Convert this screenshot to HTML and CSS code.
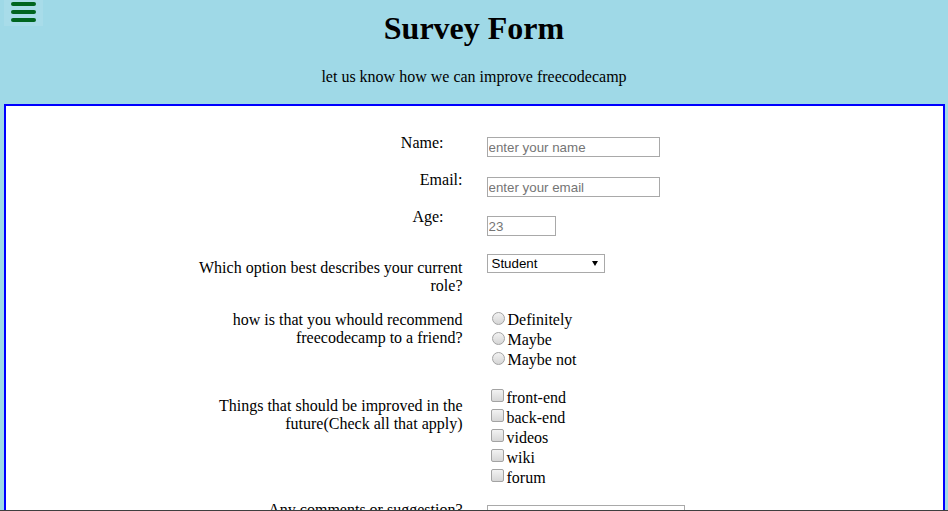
FILE: index.html
```html
<!DOCTYPE html>
<html lang="en">
<head>
<meta charset="utf-8">
<title>Survey Form</title>
<link rel="stylesheet" href="styles.css">
</head>
<body>
<header class="top">
  <button class="menu-btn" type="button" aria-label="menu">
    <svg width="25" height="20" viewBox="0 0 25 20">
      <rect x="0" y="0" width="25" height="4" rx="2" fill="#00651f"/>
      <rect x="0" y="8" width="25" height="4" rx="2" fill="#00651f"/>
      <rect x="0" y="16" width="25" height="4" rx="2" fill="#00651f"/>
    </svg>
  </button>
  <h1 class="title">Survey Form</h1>
  <p class="subtitle">let us know how we can improve freecodecamp</p>
</header>

<form class="survey">
  <div class="row r1">
    <label class="q q-indent" for="name">Name:</label>
    <div class="ctl"><input class="txt txt-long" id="name" type="text" placeholder="enter your name"></div>
  </div>
  <div class="row r2">
    <label class="q" for="email">Email:</label>
    <div class="ctl"><input class="txt txt-long" id="email" type="email" placeholder="enter your email"></div>
  </div>
  <div class="row r3">
    <label class="q q-indent" for="age">Age:</label>
    <div class="ctl"><input class="txt txt-short" id="age" type="number" placeholder="23"></div>
  </div>
  <div class="row r4">
    <label class="q" for="role">Which option best describes your current role?</label>
    <div class="ctl">
      <span class="select-wrap">
        <select id="role" class="sel">
          <option>Student</option>
          <option>Full Time Job</option>
          <option>Full Time Learner</option>
          <option>Other</option>
        </select>
      </span>
    </div>
  </div>
  <div class="row r5">
    <div class="q">how is that you whould recommend freecodecamp to a friend?</div>
    <div class="ctl">
      <div class="opt"><input class="radio" type="radio" name="rec" id="r-def"><label for="r-def">Definitely</label></div>
      <div class="opt"><input class="radio" type="radio" name="rec" id="r-may"><label for="r-may">Maybe</label></div>
      <div class="opt"><input class="radio" type="radio" name="rec" id="r-not"><label for="r-not">Maybe not</label></div>
    </div>
  </div>
  <div class="row r6">
    <div class="q">Things that should be improved in the future(Check all that apply)</div>
    <div class="ctl">
      <div class="opt"><input class="check" type="checkbox" id="c1"><label for="c1">front-end</label></div>
      <div class="opt"><input class="check" type="checkbox" id="c2"><label for="c2">back-end</label></div>
      <div class="opt"><input class="check" type="checkbox" id="c3"><label for="c3">videos</label></div>
      <div class="opt"><input class="check" type="checkbox" id="c4"><label for="c4">wiki</label></div>
      <div class="opt"><input class="check" type="checkbox" id="c5"><label for="c5">forum</label></div>
    </div>
  </div>
  <div class="row r7">
    <label class="q" for="comments">Any comments or suggestion?</label>
    <div class="ctl"><textarea id="comments" class="area"></textarea></div>
  </div>
</form>
</body>
</html>
```

FILE: styles.css
```css
html, body {
  margin: 0;
  padding: 0;
}

body {
  background: #9fd9e7;
  font-family: "Liberation Serif", "Times New Roman", serif;
  font-size: 16px;
  color: #000;
}

body::after {
  content: "";
  position: fixed;
  left: 0;
  right: 0;
  bottom: 0;
  height: 1px;
  background: #3f3f3f;
}

.top {
  text-align: center;
  padding: 10px 0 18px;
}

.menu-btn {
  position: absolute;
  top: 0;
  left: 4px;
  width: 39px;
  height: 26px;
  padding: 2px 7px 4px;
  margin: 0;
  border: 0;
  background: rgba(255, 255, 255, 0.1);
  display: block;
  line-height: 0;
}

.menu-btn svg {
  display: block;
}

.title {
  margin: 0;
  font-size: 32px;
  font-weight: bold;
  line-height: 37px;
}

.subtitle {
  margin: 21px 0 0;
  line-height: 18px;
}

.survey {
  margin: 0 3px 0 4px;
  border: 2px solid #0000ff;
  background: #fff;
  padding: 28px 0 60px;
}

.row {
  display: grid;
  grid-template-columns: 1fr 1fr;
  column-gap: 24px;
  align-items: start;
}

.q {
  justify-self: end;
  max-width: 280px;
  text-align: right;
  line-height: 18px;
}

.q-indent {
  padding-right: 19px;
}

.ctl {
  line-height: 20px;
}

.r2 { margin-top: 14px; }
.r3 { margin-top: 11px; }
.r4 { margin-top: 18px; }
.r5 { margin-top: 15px; }
.r6 { margin-top: 18px; }
.r7 { margin-top: 13px; }

.r1 .txt { margin-top: 3px; }
.r2 .txt { margin-top: 6px; }
.r3 .txt { margin-top: 8px; }
.r4 .q { margin-top: 5px; }
.r5 .q { margin-top: 1px; }
.r6 .q { margin-top: 9px; }
.r7 .area { margin-top: 4px; }

.txt {
  display: block;
  box-sizing: border-box;
  height: 20px;
  border: 1px solid #a9a9a9;
  padding: 0 1px;
  margin: 0;
  font-family: "Liberation Sans", Arial, sans-serif;
  font-size: 13.33px;
  color: #000;
  background: #fff;
  outline: none;
}

.txt::placeholder {
  color: #757575;
}

.txt-long { width: 173px; }
.txt-short { width: 69px; }

.txt::-webkit-outer-spin-button,
.txt::-webkit-inner-spin-button {
  -webkit-appearance: none;
  margin: 0;
}

.select-wrap {
  position: relative;
  display: block;
  width: 118px;
  height: 19px;
}

.select-wrap::after {
  content: "";
  position: absolute;
  left: 105px;
  top: 7px;
  width: 0;
  height: 0;
  border-left: 3.5px solid transparent;
  border-right: 3.5px solid transparent;
  border-top: 5px solid #000;
  pointer-events: none;
}

.sel {
  -webkit-appearance: none;
  appearance: none;
  display: block;
  box-sizing: border-box;
  width: 118px;
  height: 19px;
  margin: 0;
  padding: 0 0 0 4px;
  border: 1px solid #a9a9a9;
  border-radius: 0;
  background: #fff;
  font-family: "Liberation Sans", Arial, sans-serif;
  font-size: 13.33px;
  line-height: 17px;
  color: #000;
}

.opt {
  height: 20px;
  line-height: 20px;
  white-space: nowrap;
}

.radio,
.check {
  -webkit-appearance: none;
  appearance: none;
  box-sizing: border-box;
  width: 13px;
  height: 13px;
  padding: 0;
  border: 1px solid #a3a3a3;
  background: linear-gradient(#f2f2f2, #d6d6d6);
}

.radio {
  border-radius: 50%;
  margin: 0 3px 0 5px;
  vertical-align: baseline;
}

.check {
  border-radius: 2px;
  margin: 0 3px 0 4px;
  vertical-align: 1px;
}

.area {
  display: block;
  box-sizing: border-box;
  width: 198px;
  height: 36px;
  margin: 0;
  border: 1px solid #a9a9a9;
  padding: 2px;
  resize: none;
  font-family: "Liberation Mono", monospace;
  font-size: 13px;
}
```
